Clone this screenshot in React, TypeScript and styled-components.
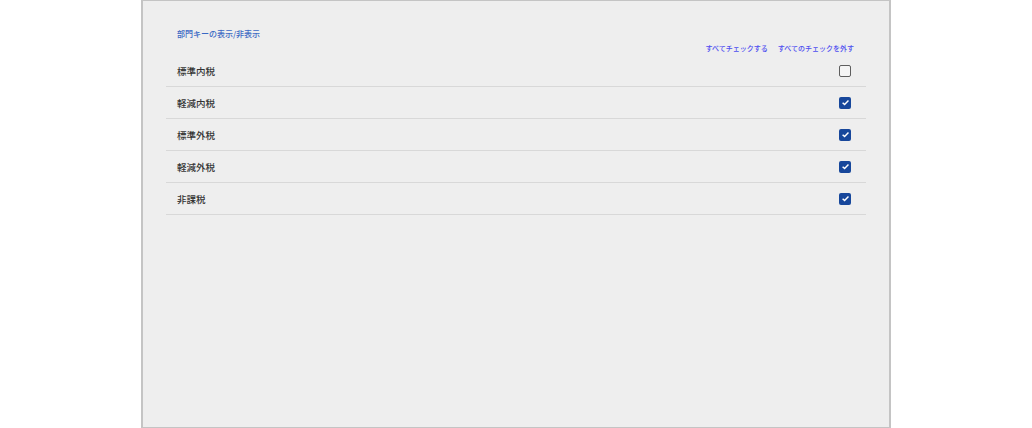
import styled, { createGlobalStyle } from "styled-components";

const GlobalStyle = createGlobalStyle`
  html, body {
    margin: 0;
    padding: 0;
    background: #ffffff;
    font-family: "Noto Sans CJK JP", "Noto Sans", sans-serif;
  }
`;

const Page = styled.div`
  width: 1032px;
  height: 428px;
  display: flex;
  justify-content: center;
`;

const Panel = styled.div`
  width: 700px;
  height: 426px;
  background: #eeeeee;
  border: 2px solid #c4c4c4;
  border-top-width: 1px;
  padding: 0 23px;
  box-sizing: content-box;
  display: flex;
  flex-direction: column;
`;

const Title = styled.div`
  margin: 27px 0 0 11px;
  font-size: 8px;
  font-weight: 500;
  line-height: 12px;
  color: #3a68c4;
`;

const Actions = styled.div`
  display: flex;
  justify-content: flex-end;
  gap: 10px;
  padding-right: 12px;
  margin-top: 2px;
`;

const ActionLink = styled.a`
  font-size: 7px;
  font-weight: 500;
  line-height: 12px;
  color: #4d4df0;
  cursor: pointer;
`;

const List = styled.ul`
  list-style: none;
  margin: 1px 0 0 0;
  padding: 0;
`;

const Row = styled.li`
  display: flex;
  align-items: center;
  justify-content: space-between;
  height: 31px;
  border-bottom: 1px solid #d8d8d8;
  padding: 0 15px 0 11px;
  font-size: 9.5px;
  font-weight: 500;
  color: #333333;
`;

const Box = styled.span<{ $checked: boolean }>`
  width: 12px;
  height: 12px;
  box-sizing: border-box;
  border-radius: 2px;
  display: flex;
  align-items: center;
  justify-content: center;
  background: ${(p) => (p.$checked ? "#17479b" : "#f4f4f4")};
  border: ${(p) => (p.$checked ? "none" : "1.5px solid #5e5e5e")};
`;

const items = [
  { name: "標準内税", checked: false },
  { name: "軽減内税", checked: true },
  { name: "標準外税", checked: true },
  { name: "軽減外税", checked: true },
  { name: "非課税", checked: true },
];

function Check({ checked }: { checked: boolean }) {
  return (
    <Box $checked={checked}>
      {checked && (
        <svg width="9" height="9" viewBox="0 0 10 10">
          <path d="M1.8 5.2 L4 7.3 L8.3 2.8" fill="none" stroke="#ffffff" strokeWidth="1.6" />
        </svg>
      )}
    </Box>
  );
}

export default function App() {
  return (
    <>
      <GlobalStyle />
      <Page>
        <Panel>
          <Title>部門キーの表示/非表示</Title>
          <Actions>
            <ActionLink>すべてチェックする</ActionLink>
            <ActionLink>すべてのチェックを外す</ActionLink>
          </Actions>
          <List>
            {items.map((item) => (
              <Row key={item.name}>
                <span>{item.name}</span>
                <Check checked={item.checked} />
              </Row>
            ))}
          </List>
        </Panel>
      </Page>
    </>
  );
}
